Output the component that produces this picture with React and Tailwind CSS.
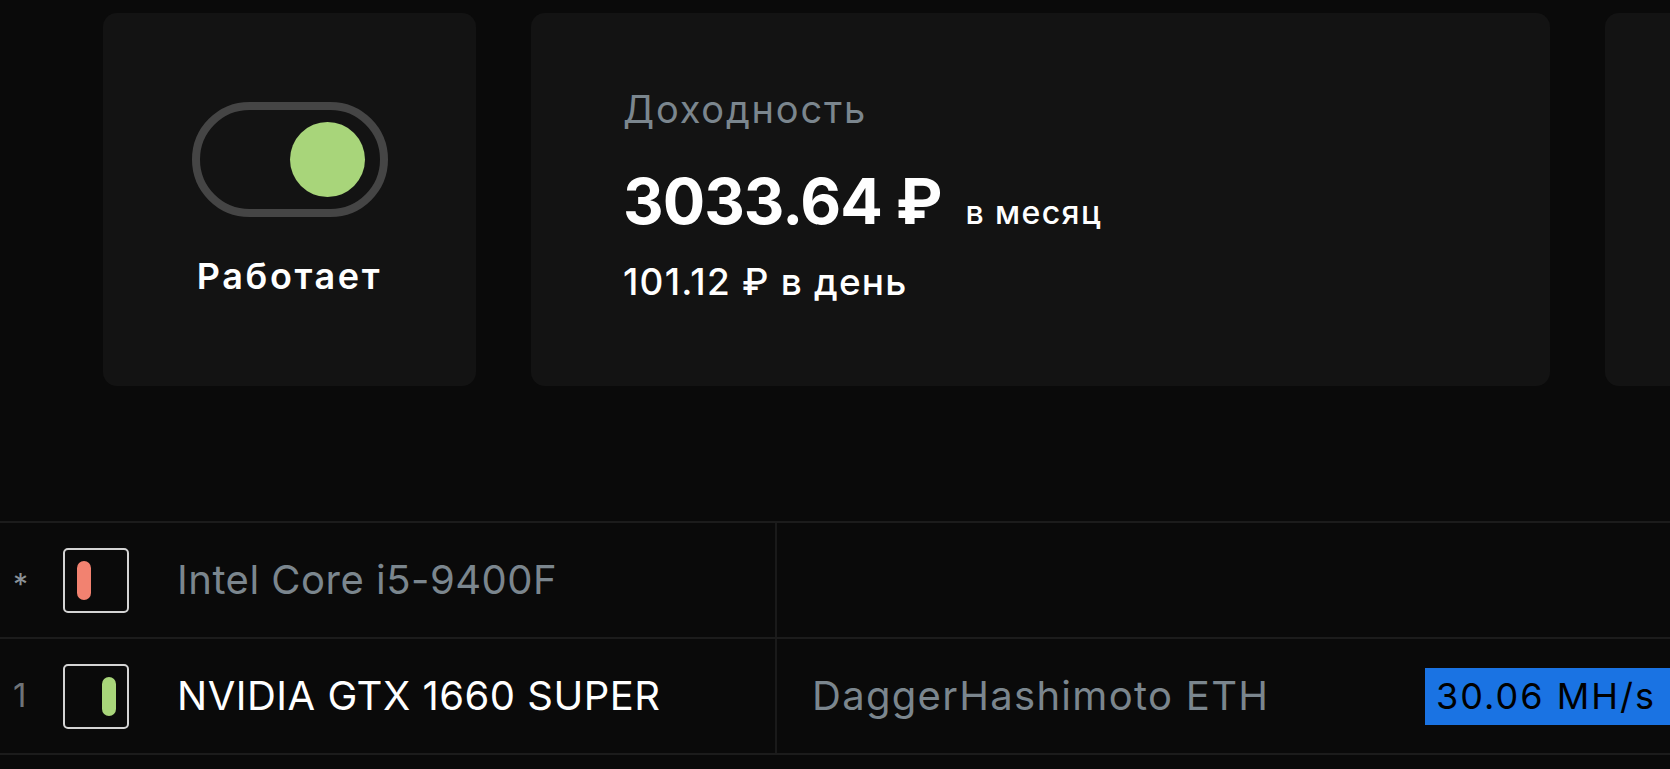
import React from "react";

const FONT = { fontFamily: "Inter, 'Noto Sans', sans-serif" };

/* =======================
   SMALL PIECES
======================= */
function Toggle({ on }) {
  return (
    <div className="w-[196px] h-[115px] rounded-full border-[8px] border-[#454545] bg-[#131313] flex items-center justify-end pr-[15px]">
      {on && <div className="w-[75px] h-[75px] rounded-full bg-[#a8d57a]" />}
    </div>
  );
}

function DeviceIcon({ color, right }) {
  return (
    <div
      className={`w-[66px] h-[65px] shrink-0 rounded-[5px] border-2 border-[#d4d4d4] flex items-center ${
        right ? "pl-[37px]" : "pl-[12px]"
      }`}
    >
      <div className={`w-[14px] h-[39px] rounded-full ${color}`} />
    </div>
  );
}

function DeviceRow({ index, indexClass, pill, right, name, nameClass, algo, speed }) {
  return (
    <div className="flex h-[116px] border-b-2 border-[#1c1c1c]">
      <div className="w-[777px] shrink-0 flex items-center border-r-2 border-[#1a1a1a]">
        <span className={`w-[63px] shrink-0 pl-[13px] ${indexClass}`}>{index}</span>
        <DeviceIcon color={pill} right={right} />
        <span className={`ml-[48px] text-[40px] leading-none tracking-[0.5px] whitespace-nowrap ${nameClass}`}>
          {name}
        </span>
      </div>
      <div className="flex-1 min-w-0 flex items-center overflow-hidden">
        <div className="w-[648px] shrink-0 pl-[35px] text-[40px] leading-none text-[#7b868e] tracking-[1.3px] whitespace-nowrap">
          {algo}
        </div>
        {speed && (
          <div className="h-[57px] w-[260px] shrink-0 bg-[#1a73e3] flex items-center pl-[11px] text-[36px] leading-none text-black tracking-[2px] whitespace-nowrap">
            {speed}
          </div>
        )}
      </div>
    </div>
  );
}

export default function App() {
  return (
    <div className="w-full h-screen overflow-hidden bg-[#0a0a0a] text-white" style={FONT}>
      {/* Top cards */}
      <div className="h-[521px] pt-[13px] pl-[103px] flex gap-[55px]">
        <div className="w-[373px] h-[373px] shrink-0 rounded-[14px] bg-[#131313] flex flex-col items-center pt-[89px]">
          <Toggle on />
          <div className="mt-[41px] text-[36px] leading-none font-semibold tracking-[2.6px]">
            Работает
          </div>
        </div>

        <div className="w-[1019px] h-[373px] shrink-0 rounded-[14px] bg-[#131313] pl-[92px] pt-[77px]">
          <div className="text-[38px] leading-none text-[#7b868e] tracking-[1.8px]">Доходность</div>
          <div className="mt-[42px] flex items-baseline">
            <span className="text-[63px] leading-none font-bold tracking-[-1px]">3033.64 ₽</span>
            <span className="ml-[24px] text-[32px] leading-none font-medium tracking-[1.4px]">в месяц</span>
          </div>
          <div className="mt-[30px] text-[37px] leading-none font-medium tracking-[1.2px]">101.12 ₽ в день</div>
        </div>

        <div className="w-[373px] h-[373px] shrink-0 rounded-[14px] bg-[#131313]" />
      </div>

      {/* Devices table */}
      <div className="border-t-2 border-[#1c1c1c]">
        <DeviceRow
          index="*"
          indexClass="text-[30px] pt-[8px] text-[#8b9298]"
          pill="bg-[#f28270]"
          name="Intel Core i5-9400F"
          nameClass="text-[#7b868e]"
          algo=""
        />
        <DeviceRow
          index="1"
          indexClass="text-[33px] text-[#6f7378]"
          pill="bg-[#a8d57a]"
          right
          name="NVIDIA GTX 1660 SUPER"
          nameClass="text-white"
          algo="DaggerHashimoto ETH"
          speed="30.06 MH/s"
        />
      </div>
    </div>
  );
}
